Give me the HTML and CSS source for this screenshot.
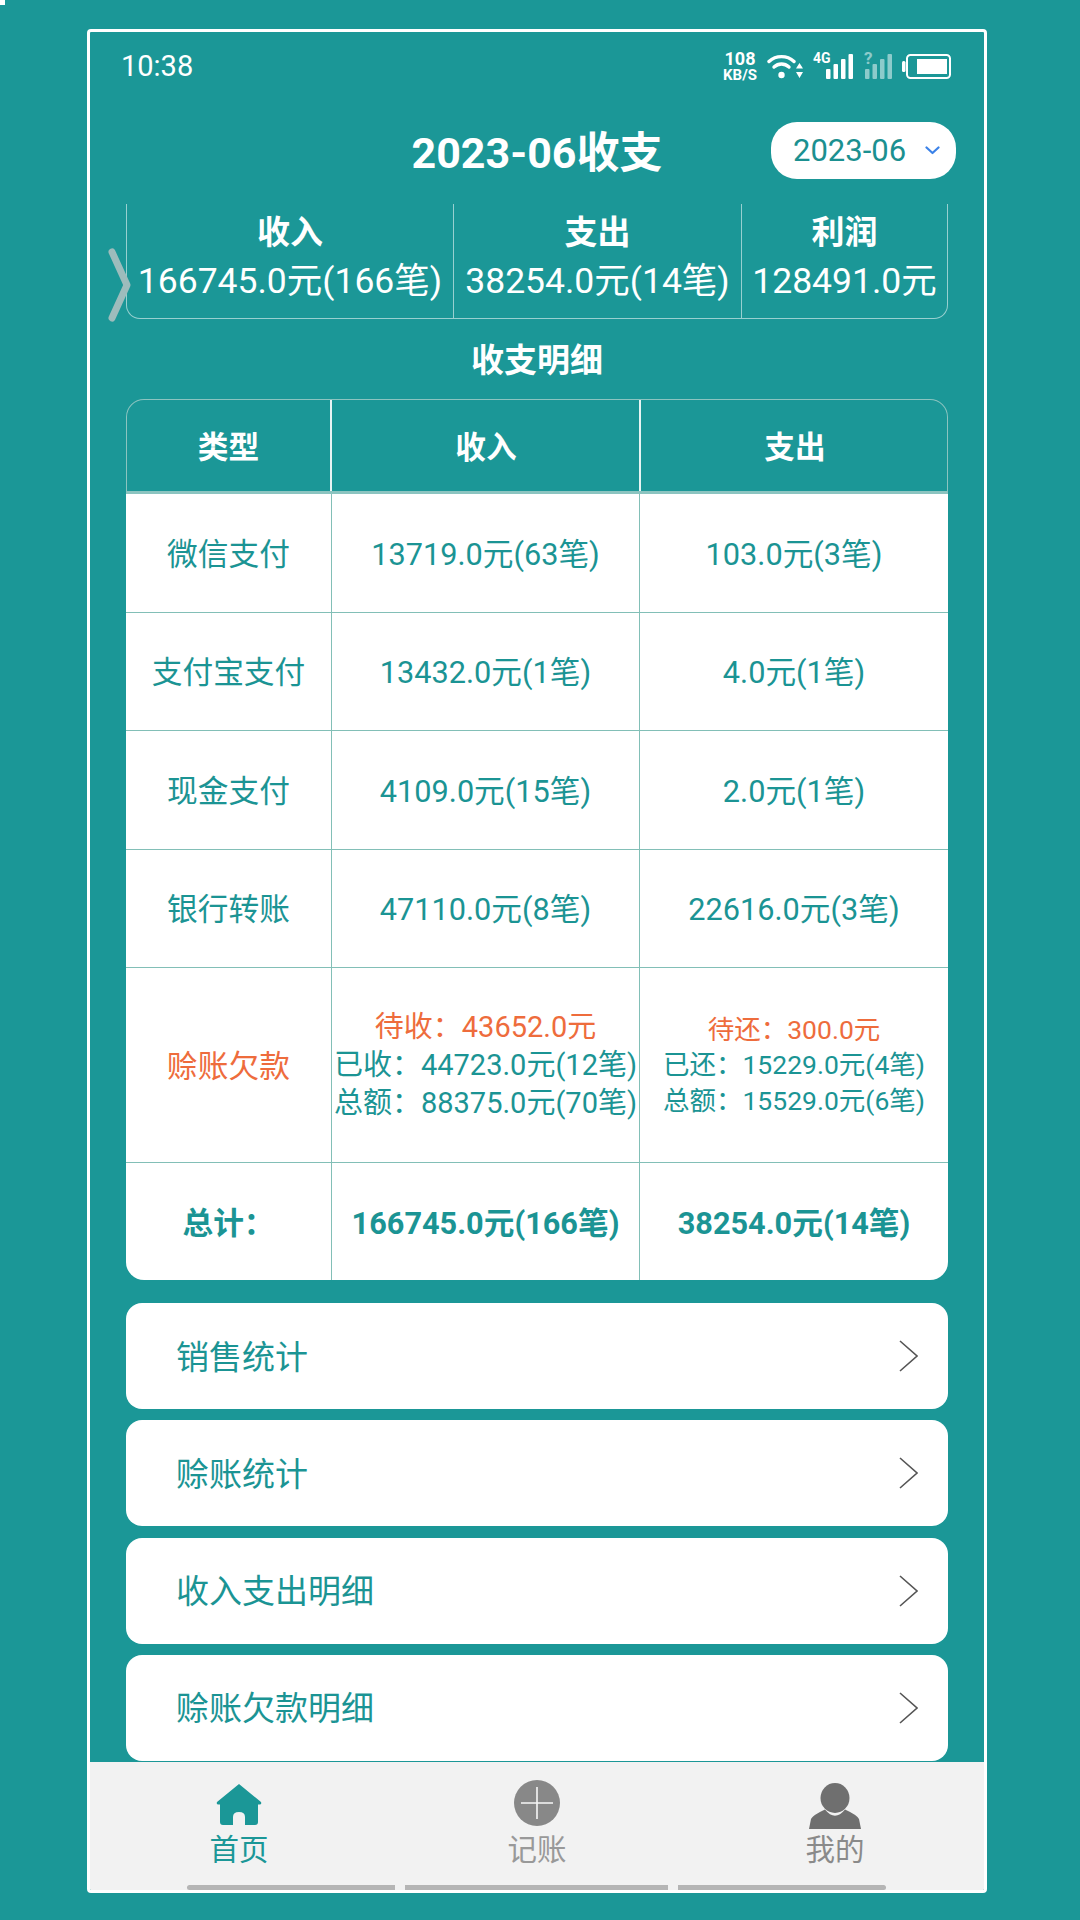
FILE: index.html
```html
<!DOCTYPE html>
<html lang="zh-CN">
<head>
<meta charset="utf-8">
<title>收支</title>
<link rel="stylesheet" href="styles.css">
</head>
<body>
<div class="corner"></div>
<main class="phone">
  <div class="status">
    <span class="time">10:38</span>
    <div class="status-icons">
      <div class="speed"><span class="speed-num">108</span><span class="speed-unit">KB/S</span></div>
      <svg class="ic-wifi" viewBox="0 0 36 25" fill="none" stroke="#fff" stroke-linecap="round">
        <path d="M2 7.500 C9 1 20 1 27 7.500" stroke-width="3.400"/>
        <path d="M7 13 C11.500 9 17.500 9 22 13" stroke-width="3.400"/>
        <circle cx="14.500" cy="21" r="3.200" fill="#fff" stroke="none"/>
        <path d="M32.500 9 L36 14.500 H29 Z M32.500 24 L36 18 H29 Z" fill="#fff" stroke="none"/>
      </svg>
      <div class="sig">
        <span class="sig-tag">4G</span>
        <svg class="ic-sig" viewBox="0 0 27 25" fill="#fff">
          <rect x="0" y="15" width="4.500" height="10" rx="1"/><rect x="7.500" y="10" width="4.500" height="15" rx="1"/>
          <rect x="15" y="5" width="4.500" height="20" rx="1"/><rect x="22.500" y="0" width="4.500" height="25" rx="1"/>
        </svg>
      </div>
      <div class="sig sig-dim">
        <span class="sig-tag">?</span>
        <svg class="ic-sig" viewBox="0 0 27 25" fill="#fff">
          <rect x="0" y="15" width="4.500" height="10" rx="1"/><rect x="7.500" y="10" width="4.500" height="15" rx="1"/>
          <rect x="15" y="5" width="4.500" height="20" rx="1"/><rect x="22.500" y="0" width="4.500" height="25" rx="1"/>
        </svg>
      </div>
      <svg class="ic-batt" viewBox="0 0 49 25">
        <rect x="0" y="7" width="3.500" height="11" rx="1.500" fill="#fff"/>
        <rect x="5" y="1" width="43" height="23" rx="3.500" fill="none" stroke="#fff" stroke-width="2"/>
        <rect x="15" y="5" width="30" height="15" fill="#fff"/>
      </svg>
    </div>
  </div>

  <header class="head">
    <span></span>
    <h1 class="title">2023-06收支</h1>
    <div class="picker">
      <span>2023-06</span>
      <svg class="picker-arrow" viewBox="0 0 15 9" fill="none" stroke="#3b82e8" stroke-width="2.200" stroke-linecap="round" stroke-linejoin="round"><path d="M1.500 1.500 L7.500 7 L13.500 1.500"/></svg>
    </div>
  </header>

  <section class="summary">
    <svg class="swipe" viewBox="0 0 24 74" fill="none" stroke="#9dbcbc" stroke-width="7" stroke-linecap="round" stroke-linejoin="round"><path d="M4 4 L19 37 L4 70"/></svg>
    <div class="sum-cell"><b>收入</b><span>166745.0元(166笔)</span></div>
    <div class="sum-cell"><b>支出</b><span>38254.0元(14笔)</span></div>
    <div class="sum-cell"><b>利润</b><span>128491.0元</span></div>
  </section>

  <h2 class="subtitle">收支明细</h2>

  <section class="table">
    <div class="row row-head"><div>类型</div><div>收入</div><div>支出</div></div>
    <div class="row"><div>微信支付</div><div>13719.0元(63笔)</div><div>103.0元(3笔)</div></div>
    <div class="row"><div>支付宝支付</div><div>13432.0元(1笔)</div><div>4.0元(1笔)</div></div>
    <div class="row"><div>现金支付</div><div>4109.0元(15笔)</div><div>2.0元(1笔)</div></div>
    <div class="row"><div>银行转账</div><div>47110.0元(8笔)</div><div>22616.0元(3笔)</div></div>
    <div class="row row-debt">
      <div class="orange">赊账欠款</div>
      <div class="stack">
        <span class="orange">待收：43652.0元</span>
        <span>已收：44723.0元(12笔)</span>
        <span>总额：88375.0元(70笔)</span>
      </div>
      <div class="stack stack-small">
        <span class="orange">待还：300.0元</span>
        <span>已还：15229.0元(4笔)</span>
        <span>总额：15529.0元(6笔)</span>
      </div>
    </div>
    <div class="row row-total"><div>总计：</div><div>166745.0元(166笔)</div><div>38254.0元(14笔)</div></div>
  </section>

  <nav class="menu">
    <a class="card"><span>销售统计</span><svg class="arrow" viewBox="0 0 19 32" fill="none" stroke="#555" stroke-width="1.600"><path d="M1 1 L18 16 L1 31"/></svg></a>
    <a class="card"><span>赊账统计</span><svg class="arrow" viewBox="0 0 19 32" fill="none" stroke="#555" stroke-width="1.600"><path d="M1 1 L18 16 L1 31"/></svg></a>
    <a class="card"><span>收入支出明细</span><svg class="arrow" viewBox="0 0 19 32" fill="none" stroke="#555" stroke-width="1.600"><path d="M1 1 L18 16 L1 31"/></svg></a>
    <a class="card"><span>赊账欠款明细</span><svg class="arrow" viewBox="0 0 19 32" fill="none" stroke="#555" stroke-width="1.600"><path d="M1 1 L18 16 L1 31"/></svg></a>
  </nav>

  <footer class="tabbar">
    <div class="tabs">
      <div class="tab tab-on">
        <svg class="tab-ic" viewBox="0 0 46 50"><path fill="#1b9797" fill-rule="evenodd" d="M23 4 L45 22 Q46 24.500 43.500 24.500 L42 24.500 L42 42 Q42 45 39 45 L7 45 Q4 45 4 42 L4 24.500 L2.500 24.500 Q0 24.500 1 22 Z M17 45 L29 45 L29 37 Q29 32 23 32 Q17 32 17 37 Z"/></svg>
        <span>首页</span>
      </div>
      <div class="tab">
        <svg class="tab-ic" viewBox="0 0 46 50"><circle cx="23" cy="23" r="23" fill="#888"/><path d="M7 23 H39 M23 7 V39" stroke="#f6f6f6" stroke-width="1.600"/></svg>
        <span>记账</span>
      </div>
      <div class="tab tab-me">
        <svg class="tab-ic" viewBox="0 0 52 50"><ellipse cx="26" cy="18" rx="14.500" ry="15" fill="#6f6f6f"/><path fill="#6f6f6f" d="M0 49 L2 39 Q4 35 16 29.500 Q26 42 36 29.500 Q48 35 50 39 L52 49 Z"/></svg>
        <span>我的</span>
      </div>
    </div>
    <div class="handles"><i class="h1"></i><i class="h2"></i><i class="h3"></i></div>
  </footer>
</main>
</body>
</html>
```

FILE: styles.css
```css
* { box-sizing: border-box; }
html, body { margin: 0; padding: 0; }
body {
  width: 1080px;
  height: 1920px;
  background: #1b9797;
  font-family: Roboto, "Noto Sans CJK SC", sans-serif;
  color: #fff;
  overflow: hidden;
  padding: 29px 93px 27px 87px;
  position: relative;
}
.corner { position: absolute; left: 0; top: 0; width: 5px; height: 5px; background: #fff; }
.phone {
  height: 1864px;
  border: 3px solid #fff;
  border-radius: 4px;
  display: flex;
  flex-direction: column;
  overflow: hidden;
}

.status {
  height: 68px;
  flex: none;
  padding: 0 33px 0 31px;
  display: flex;
  align-items: center;
  justify-content: space-between;
}
.time { font-size: 29px; }
.status-icons { display: flex; align-items: center; height: 30px; }
.speed { display: flex; flex-direction: column; align-items: center; font-weight: 700; margin-right: 10px; }
.speed-num { font-size: 18px; line-height: 18px; }
.speed-unit { font-size: 15px; line-height: 14px; }
.ic-wifi { width: 36px; height: 25px; margin-right: 10px; }
.sig { position: relative; width: 40px; height: 25px; display: flex; justify-content: flex-end; margin-right: 11px; }
.sig-tag { position: absolute; left: 0; top: -3px; font-size: 14px; line-height: 14px; font-weight: 700; }
.ic-sig { width: 27px; height: 25px; }
.sig-dim { width: 28px; opacity: .5; margin-right: 10px; }
.sig-dim .sig-tag { font-size: 17px; }
.ic-batt { width: 49px; height: 25px; }

.head {
  height: 100px;
  flex: none;
  padding: 0 28px;
  display: grid;
  grid-template-columns: 1fr auto 1fr;
  align-items: center;
}
.title { margin: 0; padding-top: 5px; font-size: 43px; font-weight: 700; line-height: 56px; }
.picker {
  justify-self: end;
  width: 185px;
  height: 57px;
  border-radius: 26px;
  background: #fff;
  color: #1b9090;
  font-size: 31px;
  display: flex;
  align-items: center;
  padding-left: 22px;
}
.picker-arrow { width: 15px; height: 9px; margin-left: 19px; }

.summary {
  position: relative;
  flex: none;
  margin: 4px 36px 0;
  height: 115px;
  display: grid;
  grid-template-columns: 327px 288px 1fr;
  border: 1px solid rgba(255, 255, 255, .55);
  border-top: 0;
  border-radius: 0 0 14px 14px;
}
.swipe { position: absolute; left: -19px; top: 44px; width: 24px; height: 74px; }
.sum-cell {
  display: flex;
  flex-direction: column;
  align-items: center;
  padding-top: 9px;
  border-right: 1px solid rgba(255, 255, 255, .55);
  white-space: nowrap;
}
.sum-cell:last-child { border-right: 0; }
.sum-cell b { font-size: 33px; line-height: 40px; font-weight: 700; }
.sum-cell span { font-size: 35.500px; line-height: 46px; margin-top: 5px; }

.subtitle {
  flex: none;
  margin: 0;
  height: 80px;
  line-height: 84px;
  text-align: center;
  font-size: 33px;
  font-weight: 700;
}

.table { flex: none; margin: 0 36px; color: #1b9494; font-size: 30.700px; }
.row {
  display: grid;
  grid-template-columns: 206px 308px 308px;
  height: 118.500px;
  background: #fff;
  border-bottom: 1.500px solid #82bfb7;
}
.row > div {
  display: flex;
  align-items: center;
  justify-content: center;
  text-align: center;
  white-space: nowrap;
  padding-bottom: 3px;
  border-right: 1.500px solid #82bfb7;
}
.row > div:last-child { border-right: 0; }
.row-head {
  height: 95px;
  background: #1b9797;
  color: #fff;
  font-weight: 700;
  border: 1.500px solid #8cc4c0;
  border-bottom-width: 3px;
  border-radius: 18px 18px 0 0;
}
.row-head > div { border-right: 2px solid #e8f4f3; }
.row-head > div:first-child { width: 205px; }
.row-debt { height: 195px; }
.row-total { height: 117px; border-bottom: 0; border-radius: 0 0 18px 18px; font-weight: 700; }
.orange { color: #ee6c3c; }
.row > .stack { flex-direction: column; font-size: 29px; line-height: 38px; padding-bottom: 0; }
.stack span { display: block; }
.row > .stack-small { font-size: 26.500px; line-height: 35.500px; }

.menu { flex: none; margin: 23px 36px 0; display: flex; flex-direction: column; gap: 11.330px; }
.card {
  height: 106px;
  background: #fff;
  border-radius: 16px;
  color: #1b9494;
  font-size: 33px;
  display: flex;
  align-items: center;
  justify-content: space-between;
  padding: 0 30px 3px 50px;
}
.arrow { width: 19px; height: 32px; margin-top: 3px; }

.tabbar { flex: none; margin-top: auto; height: 128px; background: #f2f2f2; display: flex; flex-direction: column; }
.tabs { display: grid; grid-template-columns: repeat(3, 1fr); padding-top: 18px; }
.tab { display: flex; flex-direction: column; align-items: center; color: #999; font-size: 29.500px; line-height: 40px; }
.tab-ic { width: 46px; height: 50px; display: block; }
.tab-me .tab-ic { width: 52px; }
.tab-me { color: #8a8a8a; }
.tab-on { color: #1b9797; }
.handles { margin-top: 15px; padding-left: 97px; display: flex; gap: 10px; }
.handles i { display: block; height: 5px; background: #b5b5b5; }
.h1 { width: 208px; border-radius: 3px 0 0 3px; }
.h2 { width: 263px; }
.h3 { width: 208px; border-radius: 0 3px 3px 0; }
```
